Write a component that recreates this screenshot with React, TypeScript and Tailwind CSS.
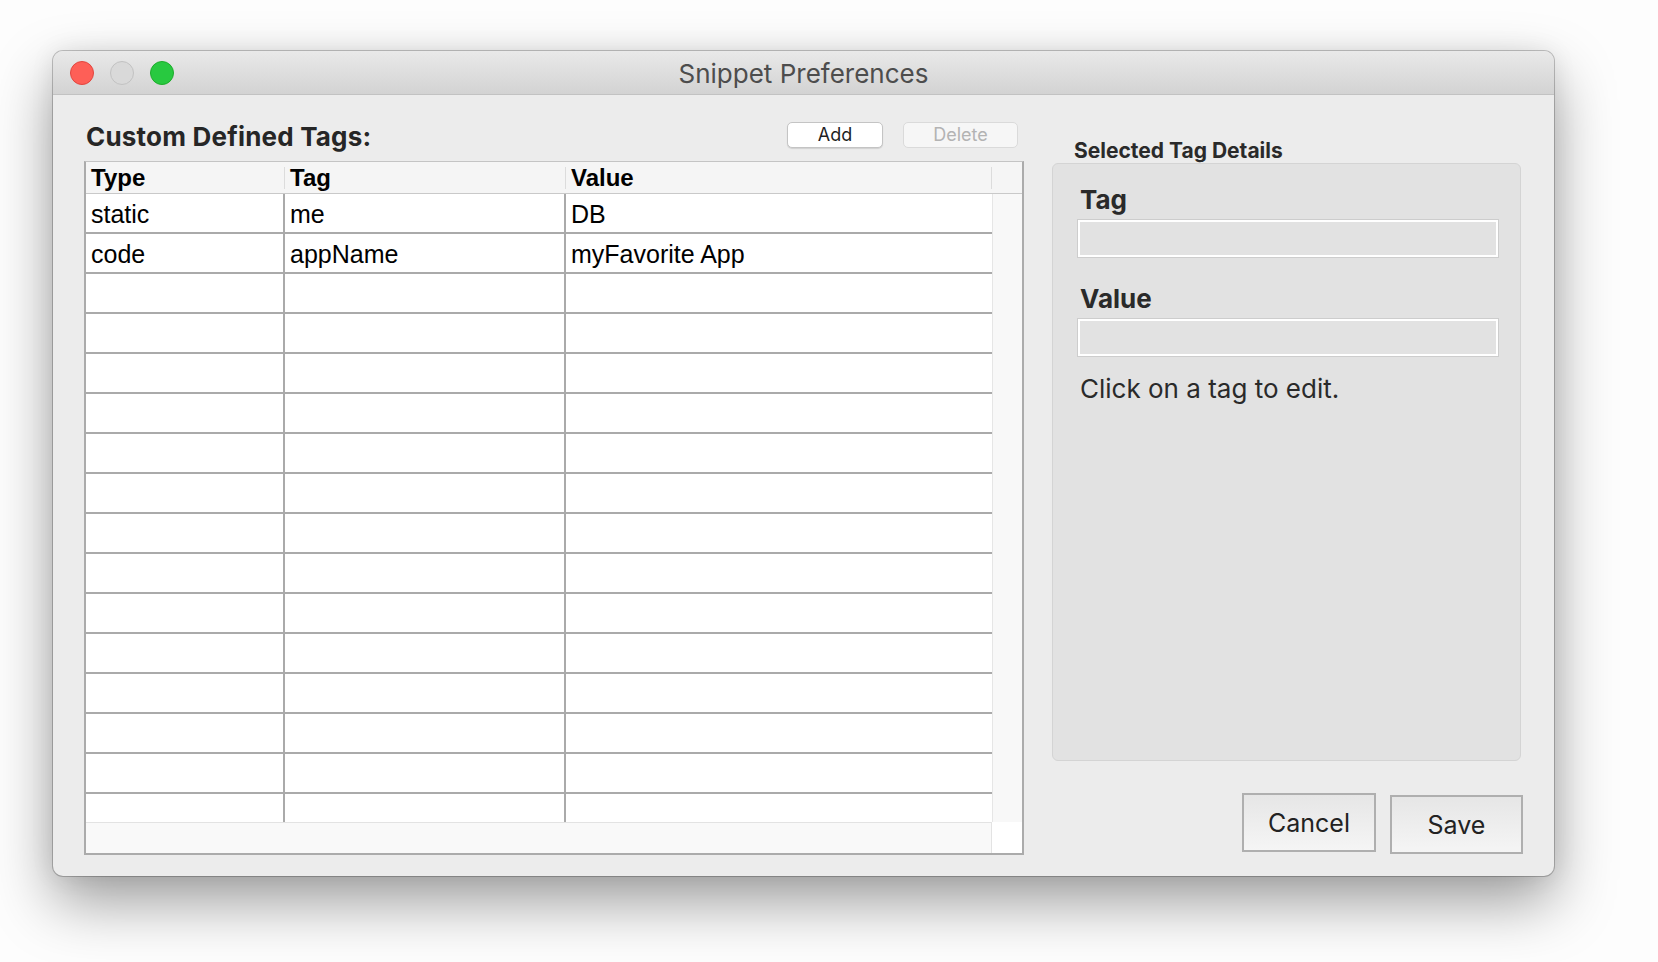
import React from 'react';

const ui = { fontFamily: 'Inter, "Liberation Sans", sans-serif' };
const cellFont = { fontFamily: '"Liberation Sans", Arial, sans-serif' };

const rows: { type: string; tag: string; value: string }[] = [
  { type: 'static', tag: 'me', value: 'DB' },
  { type: 'code', tag: 'appName', value: 'myFavorite App' },
  ...Array.from({ length: 14 }, () => ({ type: '', tag: '', value: '' })),
];

function TrafficLights() {
  return (
    <div className="flex items-center gap-[16px] pl-[17px]">
      <span className="w-[24px] h-[24px] rounded-full bg-[#fe5f57] border border-[#e2463f]" />
      <span className="w-[24px] h-[24px] rounded-full bg-[#d9d9d9] border border-[#c2c2c2]" />
      <span className="w-[24px] h-[24px] rounded-full bg-[#28c940] border border-[#1dad2b]" />
    </div>
  );
}

function HeaderCell({ label, width, divider = true }: { label: string; width: string; divider?: boolean }) {
  return (
    <div className={`${width} flex items-center justify-between h-full`}>
      <span className="pl-[5px] text-[24px] font-bold leading-[30px] text-black" style={cellFont}>
        {label}
      </span>
      {divider && <span className="w-px h-[22px] bg-[#dcdcdc]" />}
    </div>
  );
}

function TagsTable() {
  return (
    <div className="flex flex-col w-[940px] h-[694px] border-2 border-t border-[#ababab] border-t-[#c4c4c4] bg-white">
      {/* Column header */}
      <div className="flex h-[32px] bg-[#f5f5f5] border-b border-[#c9c9c9]">
        <HeaderCell label="Type" width="w-[199px]" />
        <HeaderCell label="Tag" width="w-[281px]" />
        <HeaderCell label="Value" width="w-[426px]" />
        <div className="flex-1" />
      </div>

      {/* Rows + vertical scroll track */}
      <div className="flex h-[628px]">
        <div className="w-[906px] overflow-hidden">
          {rows.map((r, i) => (
            <div key={i} className="flex h-[40px] border-b-2 border-[#aaaaaa]" style={cellFont}>
              <div className="w-[199px] border-r-2 border-[#aaaaaa] pl-[5px] pt-[3px] text-[25px] leading-[35px] text-black">
                {r.type}
              </div>
              <div className="w-[281px] border-r-2 border-[#aaaaaa] pl-[5px] pt-[3px] text-[25px] leading-[35px] text-black">
                {r.tag}
              </div>
              <div className="flex-1 pl-[5px] pt-[3px] text-[25px] leading-[35px] text-black">{r.value}</div>
            </div>
          ))}
        </div>
        <div className="flex-1 bg-[#f8f8f8] border-l border-[#e6e6e6]" />
      </div>

      {/* Horizontal scroll track */}
      <div className="flex h-[31px]">
        <div className="w-[906px] bg-[#f9f9f9] border-t border-r border-[#e3e3e3]" />
        <div className="flex-1 bg-white" />
      </div>
    </div>
  );
}

function Field({ label, className = '' }: { label: string; className?: string }) {
  return (
    <div className={`flex flex-col ${className}`}>
      <span className="ml-[3px] text-[26px] font-bold leading-[30px] text-[#2a2a2a]" style={ui}>
        {label}
      </span>
      <div className="mt-[4px] h-[39px] border border-[#cdcdcd] bg-[#e2e2e2] shadow-[inset_0_0_0_2px_#ffffff]" />
    </div>
  );
}

export default function App() {
  return (
    <div className="w-[1658px] h-[962px] bg-[#fdfdfd] overflow-hidden pt-[51px] pl-[53px]">
      <div className="w-[1501px] h-[825px] flex flex-col rounded-[10px] bg-[#ececec] shadow-[0_0_0_1px_rgba(0,0,0,0.22),0_26px_60px_rgba(0,0,0,0.38),0_0_24px_rgba(0,0,0,0.08)]">
        {/* Title bar */}
        <div className="grid grid-cols-[1fr_auto_1fr] items-center h-[44px] rounded-t-[10px] bg-gradient-to-b from-[#e9e9e9] to-[#d3d3d3] border-b border-[#c2c2c2]">
          <TrafficLights />
          <span className="pt-[3px] text-[26px] leading-[30px] text-[#4d4d4d]" style={ui}>
            Snippet Preferences
          </span>
          <div />
        </div>

        {/* Body */}
        <div className="flex flex-1 pl-[31px] gap-[28px]">
          {/* Left: tags table */}
          <div className="flex flex-col">
            <div className="flex items-start h-[66px] pt-[26px]">
              <span
                className="pl-[2px] mt-[1px] text-[26px] font-bold leading-[30px] tracking-[0.2px] text-[#262626]"
                style={ui}
              >
                Custom Defined Tags:
              </span>
              <button
                className="ml-auto mt-[1px] w-[96px] h-[26px] rounded-[5px] bg-white border border-[#c4c4c4] shadow-[0_1px_1px_rgba(0,0,0,0.12)] text-[18px] leading-none text-[#1f1f1f]"
                style={ui}
              >
                Add
              </button>
              <button
                className="ml-[20px] mr-[6px] mt-[1px] w-[115px] h-[26px] rounded-[5px] bg-[#f6f6f6] border border-[#dadada] text-[18px] leading-none text-[#b3b3b3]"
                style={ui}
              >
                Delete
              </button>
            </div>
            <TagsTable />
          </div>

          {/* Right: details */}
          <div className="flex flex-col w-[471px] pt-[44px]">
            <span className="pl-[22px] h-[24px] text-[21px] font-bold leading-[24px] text-[#2a2a2a]" style={ui}>
              Selected Tag Details
            </span>
            <div className="flex flex-col w-[469px] h-[598px] rounded-[6px] border border-[#d4d4d4] bg-[#e2e2e2] pl-[24px] pr-[21px] pt-[21px]">
              <Field label="Tag" />
              <Field label="Value" className="mt-[26px]" />
              <span className="ml-[3px] mt-[16px] text-[26px] leading-[32px] text-[#2a2a2a]" style={ui}>
                Click on a tag to edit.
              </span>
            </div>
            <div className="flex justify-end items-start gap-[14px] mt-[32px]">
              <button
                className="w-[134px] h-[59px] border-2 border-[#afafaf] bg-gradient-to-b from-[#e6e6e6] to-[#f5f5f5] pt-[2px] text-[25px] text-[#222222]"
                style={ui}
              >
                Cancel
              </button>
              <button
                className="mt-[2px] w-[133px] h-[59px] border-2 border-[#afafaf] bg-gradient-to-b from-[#e6e6e6] to-[#f5f5f5] pt-[2px] text-[25px] text-[#222222]"
                style={ui}
              >
                Save
              </button>
            </div>
          </div>
        </div>
      </div>
    </div>
  );
}
